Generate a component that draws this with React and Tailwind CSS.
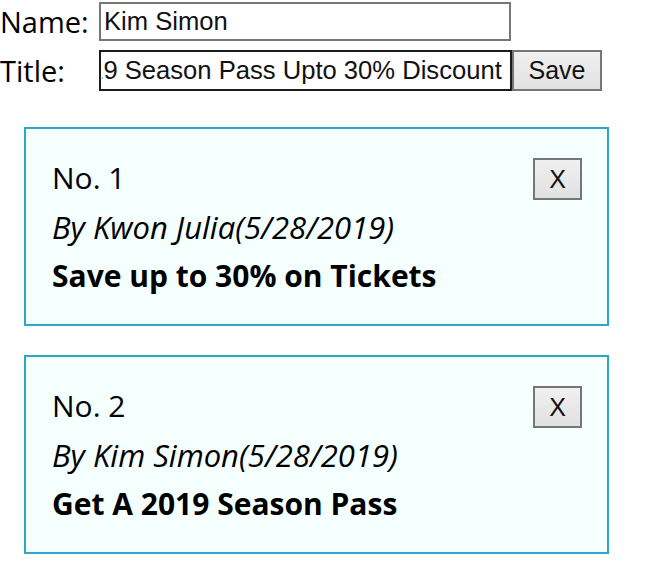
import React, { useEffect, useRef, useState } from 'react';

const posts = [
    { id: 1, author: 'Kwon Julia', date: '5/28/2019', title: 'Save up to 30% on Tickets' },
    { id: 2, author: 'Kim Simon', date: '5/28/2019', title: 'Get A 2019 Season Pass' },
];

const inputFont = { fontFamily: '"Liberation Sans", Arial, sans-serif' };

const PostCard = ({ post, index, onRemove }) => (
    <div className="ml-[24px] w-[585px] border-2 border-[#2aa8c4] bg-[#f4fffe] px-[26px] pt-[25px] pb-[24px]">
        <div className="flex items-start justify-between">
            <div className="text-[30px] leading-[48px]">No. {index + 1}</div>
            <button
                onClick={() => onRemove(post.id)}
                style={inputFont}
                className="mt-[4px] mr-[-1px] w-[49px] h-[42px] border-2 border-[#767676] bg-gradient-to-b from-[#f0f0f0] to-[#e1e1e1] text-[25px] text-[#111] leading-none"
            >
                X
            </button>
        </div>
        <div className="text-[31px] leading-[50px] italic">
            By {post.author}({post.date})
        </div>
        <div className="text-[30px] leading-[48px] font-bold">{post.title}</div>
    </div>
);

const App = () => {
    const [name, setName] = useState('Kim Simon');
    const [title, setTitle] = useState('Get A 2019 Season Pass Upto 30% Discount');
    const [items, setItems] = useState(posts);
    const titleRef = useRef(null);

    // keep the end of the long title in view, like the caret left there
    useEffect(() => {
        if (titleRef.current) titleRef.current.scrollLeft = titleRef.current.scrollWidth;
    }, []);

    const remove = (id) => setItems(items.filter(i => i.id !== id));

    return (
        <div className="min-h-[588px] bg-white text-black" style={{ fontFamily: '"Open Sans", "Noto Sans", sans-serif' }}>
            <div className="grid grid-cols-[99px_auto] items-center pt-[2px]">
                <label className="text-[29px] leading-[39px]">Name:</label>
                <div className="flex">
                    <input
                        value={name}
                        onChange={(e) => setName(e.target.value)}
                        style={inputFont}
                        className="w-[412px] h-[39px] border-2 border-[#767676] bg-white px-[3px] text-[25.6px] text-[#111] outline-none"
                    />
                </div>
                <label className="mt-[9px] text-[29px] leading-[41px]">Title:</label>
                <div className="mt-[9px] flex">
                    <input
                        ref={titleRef}
                        value={title}
                        onChange={(e) => setTitle(e.target.value)}
                        style={inputFont}
                        className="w-[413px] h-[41px] border-2 border-[#1b1b1b] bg-white pl-[1px] pr-[8px] text-[25.6px] text-[#111] outline-none"
                    />
                    <button
                        style={inputFont}
                        className="w-[90px] h-[41px] border-2 border-[#767676] bg-gradient-to-b from-[#f0f0f0] to-[#e1e1e1] text-[25px] text-[#111]"
                    >
                        Save
                    </button>
                </div>
            </div>

            <div className="mt-[36px] flex flex-col gap-[29px]">
                {items.map((post, index) => (
                    <PostCard key={post.id} post={post} index={index} onRemove={remove} />
                ))}
            </div>
        </div>
    );
};

export default App;
